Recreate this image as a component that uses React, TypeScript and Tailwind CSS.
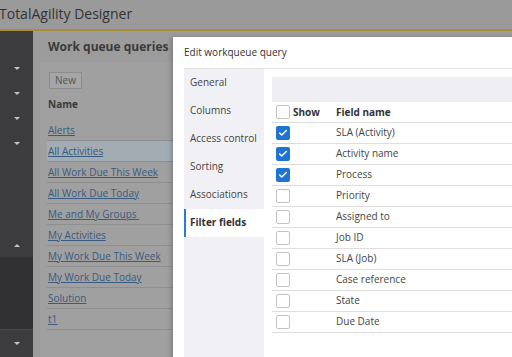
import { Check } from "lucide-react"

const queries = [
  "Alerts",
  "All Activities",
  "All Work Due This Week",
  "All Work Due Today",
  "Me and My Groups ",
  "My Activities",
  "My Work Due This Week",
  "My Work Due Today",
  "Solution",
  "t1",
]

const tabs = ["General", "Columns", "Access control", "Sorting", "Associations", "Filter fields"]

const fields = [
  { name: "SLA (Activity)", show: true },
  { name: "Activity name", show: true },
  { name: "Process", show: true },
  { name: "Priority", show: false },
  { name: "Assigned to", show: false },
  { name: "Job ID", show: false },
  { name: "SLA (Job)", show: false },
  { name: "Case reference", show: false },
  { name: "State", show: false },
  { name: "Due Date", show: false },
]

function Caret({ up = false }: { up?: boolean }) {
  return (
    <div
      className={`w-0 h-0 border-l-[3px] border-r-[3px] border-l-transparent border-r-transparent ${
        up ? "border-b-[3px] border-b-[#c4c4c6]" : "border-t-[3px] border-t-[#c4c4c6]"
      }`}
    />
  )
}

function Checkbox({ checked }: { checked: boolean }) {
  if (checked) {
    return (
      <div className="w-[14px] h-[14px] rounded-[2px] bg-[#1e74d2] flex items-center justify-center">
        <Check className="w-[10px] h-[10px] text-white" strokeWidth={3.5} />
      </div>
    )
  }
  return <div className="w-[14px] h-[14px] rounded-[2px] border border-[#c4c4c4] bg-white" />
}

export default function App() {
  return (
    <div className="relative w-[512px] h-[357px] overflow-hidden bg-[#9c9c9c] font-['Open_Sans',sans-serif]">
      {/* Top bar */}
      <div className="h-[29px] bg-[#9a9a9a] flex items-center">
        <span className="text-[14px] text-[#333] -ml-[1px] leading-none pb-[2px]">TotalAgility Designer</span>
      </div>
      <div className="h-[2px] bg-[#a88c3a]" />

      <div className="flex h-[326px]">
        {/* Sidebar */}
        <div className="w-[33px] bg-[#3c3c3f] flex flex-col">
          <div className="h-[25px]" />
          {[0, 1, 2, 3].map((i) => (
            <div key={i} className="h-[25px] flex items-center justify-center">
              <Caret />
            </div>
          ))}
          <div className="flex-1" />
          <div className="h-[24px] flex items-center justify-center">
            <Caret up />
          </div>
          <div className="h-[72px] bg-[#313133]" />
          <div className="h-[1px] bg-[#4a4a4d]" />
          <div className="h-[27px] flex items-center justify-center">
            <Caret />
          </div>
        </div>

        {/* Main content behind overlay, clipped where the dialog starts */}
        <div className="w-[140px] overflow-hidden pl-[7px]">
          <div className="h-[31px] flex items-center pl-[8px] whitespace-nowrap">
            <span className="text-[12px] font-bold text-[#3a3a3a]">Work queue queries</span>
            <span className="ml-[9px] text-[12px] text-[#555]">Q</span>
          </div>
          <div className="bg-[#a0a0a0] h-full pt-[10px] pl-[7px]">
            <div className="w-[33px] h-[17px] border border-[#8c8c8c] bg-[#a6a6a6] flex items-center justify-center text-[10px] text-[#555] ml-[2px]">
              New
            </div>
            <div className="h-[31px] flex items-center pl-[1px] text-[10px] font-bold text-[#3a3a3a]">Name</div>
            <div>
              {queries.map((q, i) => (
                <div
                  key={q}
                  className={`h-[21px] flex items-center pl-[1px] border-b border-[#8e8e8e] ${
                    i === 1 ? "bg-[#a3abb3]" : ""
                  }`}
                >
                  <span className="text-[10px] text-[#3a5a7f] underline whitespace-pre">{q}</span>
                </div>
              ))}
            </div>
          </div>
        </div>
      </div>

      {/* Dialog */}
      <div className="absolute left-[173px] top-[37px] w-[360px] h-[340px] bg-white shadow-[-2px_0_4px_rgba(0,0,0,0.2)]">
        <div className="h-[31px] flex items-center pl-[11px] pb-[1px]">
          <span className="text-[10px] text-[#333]">Edit workqueue query</span>
        </div>
        <div className="ml-[11px] flex h-full border-t border-[#e2e2e2]">
          <div className="w-[80px] bg-[#f1f1f5] flex flex-col">
            {tabs.map((t) => {
              const active = t === "Filter fields"
              return (
                <div
                  key={t}
                  className={`h-[28px] flex items-center pb-[1px] text-[10px] ${
                    active
                      ? "bg-white border-l-2 border-[#2a7ad6] pl-[4px] font-bold text-[#333]"
                      : "pl-[6px] text-[#444]"
                  }`}
                >
                  {t}
                </div>
              )
            })}
          </div>
          <div className="flex-1 pl-[8px] pt-[8px]">
            <div className="h-[25px] bg-[#eeeef3]" />
            <div className="h-[21px] flex items-center border-b border-[#dedede]">
              <div className="w-[64px] flex items-center pl-[4px] gap-[3px]">
                <Checkbox checked={false} />
                <span className="text-[10px] font-bold text-[#333]">Show</span>
              </div>
              <span className="text-[10px] font-bold text-[#333]">Field name</span>
            </div>
            {fields.map((f) => (
              <div key={f.name} className="h-[21px] flex items-center border-b border-[#dedede]">
                <div className="w-[64px] pl-[4px]">
                  <Checkbox checked={f.show} />
                </div>
                <span className="text-[10px] text-[#444] pb-[1px]">{f.name}</span>
              </div>
            ))}
          </div>
        </div>
      </div>
    </div>
  )
}
